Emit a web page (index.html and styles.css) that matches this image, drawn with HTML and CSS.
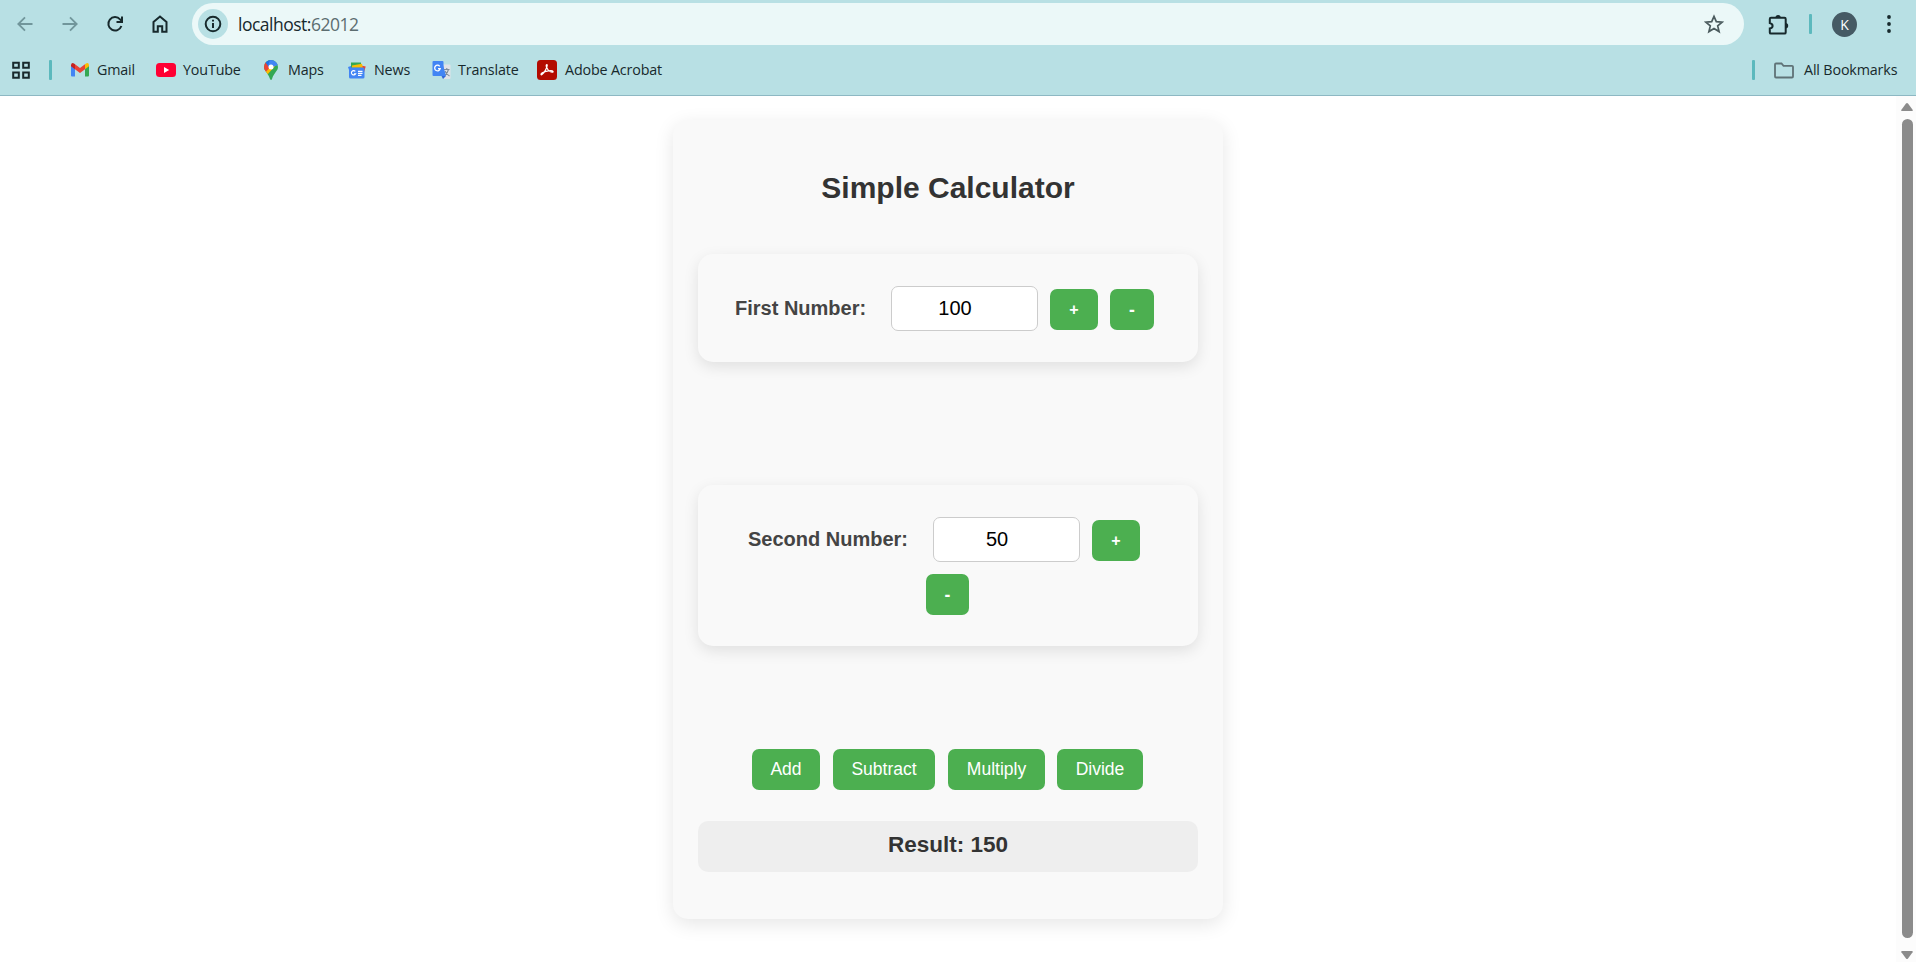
FILE: index.html
```html
<!DOCTYPE html>
<html lang="en">
<head>
<meta charset="utf-8">
<title>Simple Calculator</title>
<link rel="stylesheet" href="styles.css">
</head>
<body>
<header class="chrome">
  <div class="toolbar">
    <nav class="nav">
      <svg class="dim" width="20" height="20" viewBox="0 0 20 20"><path d="M17.500 10H3.500M10 3.300 3.300 10 10 16.700"/></svg>
      <svg class="dim" width="20" height="20" viewBox="0 0 20 20"><path d="M2.500 10h14M10 3.300 16.700 10 10 16.700"/></svg>
      <svg width="20" height="20" viewBox="0 0 20 20"><path d="M16.400 12a6.700 6.700 0 1 1-1.300-6.600l1.900 2M17 2.500v5.400h-5.500"/></svg>
      <svg width="20" height="20" viewBox="0 0 20 20"><path d="M3.500 17.800V8L10 2.600 16.500 8v9.800h-4.300v-5.600H7.800v5.600z"/></svg>
    </nav>
    <div class="omnibox">
      <span class="info"><svg width="20" height="20" viewBox="0 0 20 20"><circle cx="10" cy="10" r="7.300"/><path d="M10 9v5M10 5.700v1.900"/></svg></span>
      <span class="url">localhost:<span class="port">62012</span></span>
      <svg class="star" width="20" height="20" viewBox="0 0 20 20"><path d="m10 2.300 2.300 5.300 5.900.5-4.500 3.800 1.400 5.700-5.100-3.100-5.100 3.100 1.400-5.700L1.800 8.100l5.900-.5z"/></svg>
    </div>
    <div class="actions">
      <svg width="22" height="22" viewBox="0 0 22 22"><path d="M4 4.800h13.500q1.200 0 1.200 1.200v13.400q0 1.200-1.200 1.200H4q-1.200 0-1.200-1.200v-4q2.800-.5 2.800-2.500T2.800 10V6Q2.800 4.800 4 4.800z"/><path class="solid" d="M8.500 4.500a2.600 2.600 0 0 1 5.200 0zM18.500 10a2.700 2.700 0 0 1 0 5.400z"/></svg>
      <i class="bar"></i>
      <span class="avatar">K</span>
      <svg class="menu" width="6" height="20" viewBox="0 0 6 20"><circle cx="3" cy="3" r="1.900"/><circle cx="3" cy="10" r="1.900"/><circle cx="3" cy="17" r="1.900"/></svg>
    </div>
  </div>
  <div class="bookmarks">
    <svg class="apps" width="20" height="20" viewBox="0 0 20 20"><path d="M2.200 2.700h5.600v5H2.200zM12.200 2.700h5.600v5h-5.600zM2.200 12.500h5.600v5.300H2.200zM12.200 12.500h5.600v5.300h-5.600z"/></svg>
    <i class="bar"></i>
    <span class="bm gmail"><svg width="20" height="20" viewBox="0 0 20 20"><path fill="#4285f4" d="M1 5v10.500q0 1 1 1h3V8z"/><path fill="#34a853" d="M19 5v10.500q0 1-1 1h-3V8z"/><path fill="#ea4335" d="M5 4.200 10 8l5-3.800v5L10 13 5 9.200z"/><path fill="#c5221f" d="M1 5q.5-3 3-1.600l1 .8v5L1 6.300z"/><path fill="#fbbc04" d="M19 5q-.5-3-3-1.600l-1 .8v5l4-2.900z"/></svg><span>Gmail</span></span>
    <span class="bm youtube"><svg width="20" height="20" viewBox="0 0 20 20"><rect y="3" width="20" height="14" rx="3.500" fill="#ff0033"/><path fill="#fff" d="m8 7 5.200 3L8 13z"/></svg><span>YouTube</span></span>
    <span class="bm maps"><svg width="20" height="20" viewBox="0 0 20 20"><clipPath id="pin"><path d="M10 0a7 7 0 0 1 7 7c0 4-4 5.500-6 12q-.900 2-2 0C7 12.500 3 11 3 7a7 7 0 0 1 7-7z"/></clipPath><g clip-path="url(#pin)"><path fill="#34a853" d="M0 0h20v20H0z"/><path fill="#fbbc04" d="M3 12 12 2l3 3-9 10z"/><path fill="#ea4335" d="M1 1h4l5 5-6 7-3-3z"/><path fill="#1a73e8" d="M4 2 7-1h5L8 7z"/><path fill="#4285f4" d="M9 0h4l5 5-4 1-4 2-3-2z"/></g><circle cx="10" cy="7" r="2.500" fill="#fff"/></svg><span>Maps</span></span>
    <span class="bm news"><svg width="20" height="20" viewBox="0 0 20 20"><path fill="#ea4335" d="m14 5.500 4.700 1-2 7-3-1z"/><path fill="#4285f4" d="M1 7l3-1v4H2z"/><path fill="#34a853" d="M4 2.500h10V8H4z"/><path fill="#fbbc04" d="m5 5.500 10-1.700.8 4H5z"/><rect x="2" y="7.500" width="15.500" height="11" rx="1.500" fill="#4285f4"/><path d="M8.300 11.300a2.200 2.200 0 1 0 .3 2.500H7M11 11.300h4.500M11 13.300h4.500M11 15.300h3.500" stroke="#fff" stroke-width="1.200" fill="none"/></svg><span>News</span></span>
    <span class="bm translate"><svg width="20" height="20" viewBox="0 0 20 20"><path fill="#dfe3e8" d="M9 4.500h9.500q1 0 1 1V18q0 1-1 1H13z"/><path d="M13 9.500h5.500M15.800 8v1.500M17.500 9.500q-1 4-4 6M14 11q1.500 3.500 4.500 5" stroke="#7e8b98" stroke-width="1.100" fill="none"/><path fill="#3367d6" d="M10.500 16H15l-3 3z"/><rect x="1.500" y="1" width="11" height="15" rx="1" fill="#4285f4"/><path fill="#4285f4" d="m11 1 4 15H9z"/><path d="M8.700 6.300a2.800 2.800 0 1 0 .5 2.400H7" stroke="#fff" stroke-width="1.300" fill="none"/></svg><span>Translate</span></span>
    <span class="bm acrobat"><svg width="20" height="20" viewBox="0 0 20 20"><rect width="20" height="20" rx="3.500" fill="#b30b00"/><path d="M9.800 4.500c-1.700.2.300 5.200 3.200 7 2 1.200 3.500.7 3-.2-.8-1.200-7.500-.4-10.700 1.500-2 1.300-1.400 2.500-.3 1.800C7.600 13 11.500 4.500 9.800 4.500z" stroke="#fff" stroke-width="1.200" fill="none"/></svg><span>Adobe Acrobat</span></span>
    <div class="all"><i class="bar"></i><svg class="folder" width="22" height="20" viewBox="0 0 22 20"><path d="M2 4.500q0-1 1-1h5.500l2 2.300H19q1 0 1 1v9.700q0 1-1 1H3q-1 0-1-1z"/></svg><span>All Bookmarks</span></div>
  </div>
</header>
<div class="viewport">
  <main class="page">
    <section class="card">
      <h1>Simple Calculator</h1>
      <div class="group first"><label>First Number:</label><span class="field">100</span><button class="plus">+</button><button class="minus">-</button></div>
      <div class="group second"><label>Second Number:</label><span class="field">50</span><button class="plus">+</button><button class="minus">-</button></div>
      <div class="ops"><button class="add">Add</button><button class="sub">Subtract</button><button class="mul">Multiply</button><button class="div">Divide</button></div>
      <div class="result">Result: 150</div>
    </section>
  </main>
  <aside class="scroll"><svg width="12" height="10" viewBox="0 0 12 10"><path d="M5 1.500q1-1.200 2 0l4.600 6.300q.6 1.200-.8 1.200H1.200Q-.2 9 .4 7.800z"/></svg><i class="thumb"></i><svg width="12" height="10" viewBox="0 0 12 10"><path d="M5 8.500q1 1.200 2 0l4.600-6.300Q12.200 1 10.800 1H1.200Q-.2 1 .4 2.200z"/></svg></aside>
</div>
</body>
</html>
```
FILE: styles.css
```css
* { box-sizing: border-box; }
body { margin: 0; width: 1916px; height: 962px; overflow: hidden; background: #fff; font-family: "Liberation Sans", Arial, sans-serif; }
svg { display: block; flex: none; }
.chrome { height: 96px; background: #b8e0e4; border-bottom: 1px solid #8db8c3; font-family: "Open Sans", "Noto Sans", sans-serif; color: #17292c; }
.chrome svg { fill: none; }
.toolbar { display: flex; height: 48px; padding-top: 3px; }
.nav { display: flex; align-items: center; gap: 25px; height: 41px; width: 192px; padding-left: 15px; }
.nav svg, .info svg, .actions svg, .apps { stroke: #17292c; stroke-width: 2; }
.nav .dim { stroke: #71969b; stroke-width: 1.8; }
.omnibox { display: flex; align-items: center; width: 1552px; height: 42px; padding: 0 20px 0 6px; border-radius: 21px; background: #ebf8f8; }
.info { display: grid; place-items: center; width: 30px; height: 30px; border-radius: 50%; background: #b8e0e4; }
.url { margin-left: 10px; font-size: 17.5px; letter-spacing: -0.5px; }
.port { color: #5c6d70; }
.star { margin-left: auto; stroke: #4b5b5e; stroke-width: 1.7; }
.actions { display: flex; align-items: center; height: 42px; padding-left: 23px; }
.actions .solid { fill: #17292c; stroke: none; }
.bar { display: block; width: 3px; height: 20px; border-radius: 1px; background: #5cb9bd; }
.actions .bar { margin-left: 20px; }
.avatar { display: grid; place-items: center; width: 25px; height: 25px; margin-left: 20px; border-radius: 50%; background: #455a64; color: #fff; font-size: 14px; }
.actions .menu { margin-left: 29px; fill: #17292c; stroke: none; }
.bookmarks { display: flex; align-items: center; height: 44px; padding-left: 11px; font-size: 14.3px; letter-spacing: -0.15px; white-space: nowrap; }
.bookmarks span > span, .all span { padding-bottom: 2px; }
.bookmarks > .bar { margin: 0 18px 0 18px; }
.bm { display: flex; align-items: center; gap: 8px; }
.gmail { width: 86px; gap: 7px; }
.youtube { width: 105px; gap: 7px; }
.maps { width: 86px; gap: 7px; }
.news { width: 84px; gap: 7px; }
.translate { width: 106px; gap: 7px; }
.all { display: flex; align-items: center; margin-left: auto; width: 164px; }
.folder { margin: 0 9px 0 18px; stroke: #5f7276; stroke-width: 1.8; }
.viewport { display: flex; height: 866px; }
.page { display: flex; justify-content: center; width: 1896px; padding-top: 24px; }
.card { width: 550px; height: 799px; padding: 50px 25px 0; border-radius: 15px; background: #f9f9f9; box-shadow: 0 5px 19px rgba(0,0,0,.1); text-align: center; }
h1 { margin: 0 0 48px; font-size: 30px; line-height: 36px; color: #333; }
.group { display: flex; flex-wrap: wrap; align-items: flex-start; align-content: flex-start; border-radius: 15px; background: #f9f9f9; box-shadow: 0 5px 15px rgba(0,0,0,.1); }
.first { height: 108px; padding: 32px 0 0 37px; }
.second { height: 161px; margin-top: 123px; padding: 32px 50px 0; }
label { width: 156px; text-align: left; font-size: 20px; line-height: 44px; font-weight: bold; color: #444; white-space: nowrap; }
.second label { width: 185px; }
.field { width: 147px; height: 45px; padding-right: 19px; border: 1px solid #ccc; border-radius: 7px; background: #fff; font-size: 20px; line-height: 43px; color: #000; }
button { height: 41px; padding: 0; border: 0; border-radius: 7px; background: #4caf50; color: #fff; font: 17.5px/41px "Liberation Sans", Arial, sans-serif; }
.plus { width: 48px; margin: 3px 0 0 12px; font-weight: bold; font-size: 16px; }
.minus { width: 44px; margin: 3px 0 0 12px; padding-top: 1px; font-weight: bold; }
.second .minus { width: 43px; margin: 12px 0 0 178px; }
.ops { display: flex; margin-top: 103px; padding-left: 54px; }
.add { width: 68px; margin-right: 13px; }
.sub { width: 102px; margin-right: 13px; }
.mul { width: 97px; margin-right: 12px; }
.div { width: 86px; }
.result { height: 51px; margin-top: 31px; border-radius: 10px; background: #eee; font-size: 22.5px; line-height: 48px; font-weight: bold; color: #333; }
.scroll { display: flex; flex-direction: column; align-items: center; width: 20px; padding: 6px 0 2px 2px; background: #fcfcfc; }
.scroll svg { fill: #8b8b8b; }
.thumb { width: 11px; height: 819px; margin: 7px 0 12px; border-radius: 6px; background: #8b8b8b; }
```
